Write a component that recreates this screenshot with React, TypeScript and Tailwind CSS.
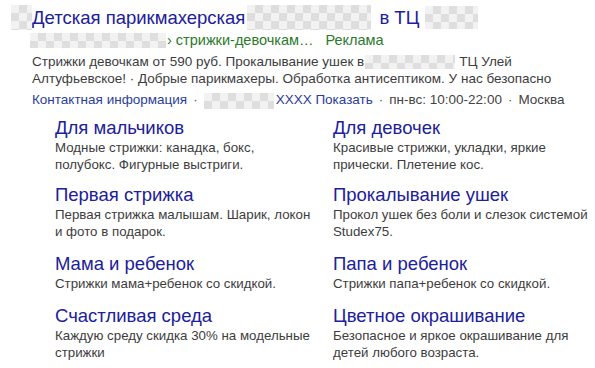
const checker =
  'bg-[repeating-conic-gradient(#d6d6d6_0_25%,#efefef_0_50%)] bg-[length:16px_16px] opacity-80';

function Blur({ className }: { className: string }) {
  return <span className={`inline-block align-middle ${checker} ${className}`} />;
}

type Sitelink = { title: string; lines: string[] };

// rows of two, descriptions broken as in the ad
const ROWS: { mt: string; items: Sitelink[] }[] = [
  {
    mt: 'mt-[0px]',
    items: [
      { title: 'Для мальчиков', lines: ['Модные стрижки: канадка, бокс,', 'полубокс. Фигурные выстриги.'] },
      { title: 'Для девочек', lines: ['Красивые стрижки, укладки, яркие', 'прически. Плетение кос.'] },
    ],
  },
  {
    mt: 'mt-[12px]',
    items: [
      { title: 'Первая стрижка', lines: ['Первая стрижка малышам. Шарик, локон', 'и фото в подарок.'] },
      { title: 'Прокалывание ушек', lines: ['Прокол ушек без боли и слезок системой', 'Studex75.'] },
    ],
  },
  {
    mt: 'mt-[14px]',
    items: [
      { title: 'Мама и ребенок', lines: ['Стрижки мама+ребенок со скидкой.'] },
      { title: 'Папа и ребенок', lines: ['Стрижки папа+ребенок со скидкой.'] },
    ],
  },
  {
    mt: 'mt-[14px]',
    items: [
      { title: 'Счастливая среда', lines: ['Каждую среду скидка 30% на модельные', 'стрижки'] },
      { title: 'Цветное окрашивание', lines: ['Безопасное и яркое окрашивание для', 'детей любого возраста.'] },
    ],
  },
];

export default function App() {
  return (
    <div className="w-[595px] h-[368px] bg-white overflow-hidden font-['Liberation_Sans',Arial,sans-serif] relative">
      <div className="absolute left-[11px] top-[5px] w-[21px] h-[25px] bg-[repeating-conic-gradient(#d6d6d6_0_25%,#efefef_0_50%)] bg-[length:16px_16px] opacity-80" />

      <div className="pl-[32px] pt-[5px]">
        <div className="flex items-center h-[25px] text-[18.5px] text-[#20209a] whitespace-nowrap">
          <span>Детская парикмахерская</span>
          <Blur className="w-[124px] h-[25px] ml-[2px]" />
          <span className="ml-[8px]">в ТЦ</span>
          <Blur className="w-[53px] h-[23px] ml-[6px]" />
        </div>

        <div className="flex items-center h-[17px] mt-[2px] -ml-[2px] text-[14.5px] text-[#2a7a2a] whitespace-nowrap">
          <Blur className="w-[136px] h-[15px]" />
          <span className="ml-[1px]">›&nbsp;стрижки-девочкам…</span>
          <span className="ml-[12px]">Реклама</span>
        </div>

        <div className="mt-[4px] text-[13.5px] leading-[17px] text-[#3d3d3d]">
          <div className="whitespace-nowrap flex items-center">
            <span>Стрижки девочкам от 590 руб. Прокалывание ушек в</span>
            <Blur className="w-[90px] h-[14px] ml-[1px]" />
            <span className="ml-[4px]">ТЦ Улей</span>
          </div>
          <div className="whitespace-nowrap">
            Алтуфьевское! · Добрые парикмахеры. Обработка антисептиком. У нас безопасно
          </div>
        </div>

        <div className="flex items-center mt-[5px] h-[17px] text-[13.5px] whitespace-nowrap">
          <span className="text-[#2b3d9c]">Контактная информация</span>
          <span className="text-[#555] mx-[6px]">·</span>
          <Blur className="w-[70px] h-[16px]" />
          <span className="text-[#2b3d9c] ml-[2px]">XXXX Показать</span>
          <span className="text-[#555] mx-[6px]">·</span>
          <span className="text-[#444]">пн-вс: 10:00-22:00</span>
          <span className="text-[#555] mx-[6px]">·</span>
          <span className="text-[#444]">Москва</span>
        </div>
      </div>

      <div className="pl-[55px] mt-[9px]">
        {ROWS.map((row, i) => (
          <div key={i} className={`grid grid-cols-[278px_260px] ${row.mt}`}>
            {row.items.map((l) => (
              <div key={l.title}>
                <div className="text-[18.5px] leading-[20px] text-[#20209a] whitespace-nowrap">{l.title}</div>
                <div className="text-[13.3px] leading-[17px] text-[#3d3d3d] mt-[1px] whitespace-nowrap">
                  {l.lines.map((t) => (
                    <div key={t}>{t}</div>
                  ))}
                </div>
              </div>
            ))}
          </div>
        ))}
      </div>
    </div>
  );
}
